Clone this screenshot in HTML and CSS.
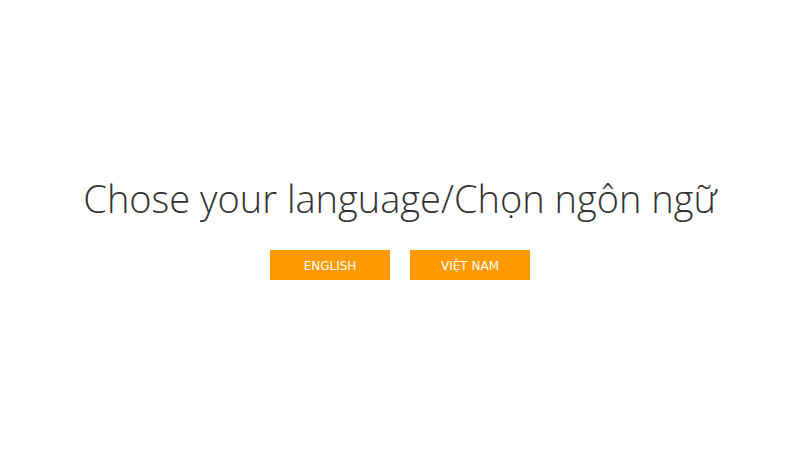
FILE: index.html
```
<!DOCTYPE html>
<html>
<head>
<meta charset="utf-8">
<link rel="stylesheet" href="styles.css">
</head>
<body>
<div class="page">
  <h1 class="title">Chose your language/Chọn ngôn ngữ</h1>
  <div class="buttons">
    <a class="btn">ENGLISH</a>
    <a class="btn">VIỆT NAM</a>
  </div>
</div>
</body>
</html>
```
FILE: styles.css
```
html, body { margin: 0; padding: 0; background: #fff; }
.page {
  width: 800px;
  height: 450px;
  display: flex;
  flex-direction: column;
  align-items: center;
  padding-top: 173px;
  box-sizing: border-box;
}
.title {
  margin: 0;
  font-family: "Open Sans", sans-serif;
  font-weight: 300;
  font-size: 38px;
  line-height: 50px;
  color: #333;
}
.buttons {
  display: flex;
  gap: 20px;
  margin-top: 27px;
}
.btn {
  width: 120px;
  height: 30px;
  padding-top: 2px;
  box-sizing: border-box;
  background: #ff9900;
  color: #fff;
  font-family: "DejaVu Sans", sans-serif;
  font-size: 12px;
  display: flex;
  align-items: center;
  justify-content: center;
}
```
